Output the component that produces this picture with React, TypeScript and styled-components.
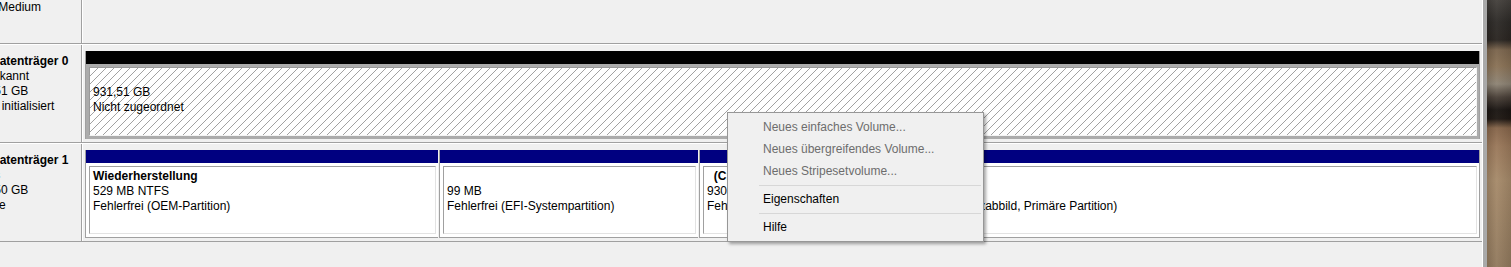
import React from 'react';
import styled, { createGlobalStyle } from 'styled-components';

const GlobalStyle = createGlobalStyle`
  html, body { margin: 0; padding: 0; background: #f0f0f0; }
  body {
    font-family: "Segoe UI", "Liberation Sans", Arial, sans-serif;
    font-size: 12px;
    color: #000;
    overflow: hidden;
  }
  #root { width: 1511px; height: 267px; }
`;

const Desktop = styled.div`
  position: relative;
  display: flex;
  width: 1511px;
  height: 267px;
  overflow: hidden;
`;

const Window = styled.div`
  flex: 0 0 1520px;
  margin-left: -33px;
  display: flex;
  flex-direction: column;
  box-sizing: border-box;
  height: 100%;
  background: #f0f0f0;
  border-right: 4px solid #a9a9a9;
`;

const DiskList = styled.div`
  flex: 1;
  margin-top: -55px;
  border-right: 1px solid #ffffff;
`;

const Row = styled.div`
  display: flex;
  height: 99px;
  box-sizing: border-box;
  border-top: 1px solid #ffffff;
  border-bottom: 1px solid #a0a0a0;
`;

const LabelCell = styled.div`
  flex: 0 0 115px;
  box-sizing: border-box;
  border-right: 1px solid #a0a0a0;
  padding: 9px 0 0 4px;
  line-height: 15px;
  white-space: nowrap;
  overflow: hidden;
`;

const LabelTitle = styled.div`
  display: flex;
  align-items: center;
  height: 15px;
  font-weight: bold;
  svg { flex: 0 0 16px; margin-right: 4px; }
`;

const LabelLine = styled.div`
  height: 15px;
`;

const GraphicCell = styled.div`
  flex: 1;
  display: flex;
  gap: 1px;
  border-left: 1px solid #ffffff;
  padding: 6px 2px 3px 2px;
  min-width: 0;
`;

const Partition = styled.div<{ $width?: number; $last?: boolean }>`
  display: flex;
  flex-direction: column;
  flex: ${(p) => (p.$width ? `0 0 ${p.$width}px` : '1')};
  box-sizing: border-box;
  border-left: 1px solid #a0a0a0;
  border-right: ${(p) => (p.$last ? '1px solid #a0a0a0' : '0')};
  min-width: 0;
`;

const Bar = styled.div<{ $color: string }>`
  height: 13px;
  background: ${(p) => p.$color};
`;

const Body = styled.div`
  height: 75px;
  box-sizing: border-box;
  display: flex;
  background: #ffffff;
  border-bottom: 1px solid #a0a0a0;
  padding: 3px 2px 3px 3px;
`;

const FrameBody = styled.div`
  height: 75px;
  box-sizing: border-box;
  display: flex;
  background: #acacac;
  padding: 3px 2px 3px 3px;
`;

const Inner = styled.div`
  flex: 1;
  box-sizing: border-box;
  border-top: 1px solid #a0a0a0;
  border-left: 1px solid #a0a0a0;
  border-right: 1px solid #e3e3e3;
  border-bottom: 1px solid #e3e3e3;
  padding: 2px 3px;
  line-height: 15px;
  white-space: nowrap;
  overflow: hidden;
  background: #ffffff;
`;

const HatchInner = styled(Inner)`
  border-top-color: #9a9a9a;
  border-left-color: #9a9a9a;
  border-right-color: #f4f4f4;
  border-bottom-color: #f4f4f4;
  background-color: #ffffff;
  background-image: linear-gradient(
    135deg,
    transparent 0 44%,
    #a2a2a2 44% 56%,
    transparent 56% 100%
  );
  background-size: 8px 8px;
`;

const Line = styled.div`
  height: 15px;
`;

const TitleLine = styled.div`
  height: 15px;
  font-weight: bold;
  white-space: pre;
`;

const Wallpaper = styled.div`
  flex: 1;
  background:
    linear-gradient(90deg, rgba(0,0,0,0.12), rgba(255,255,255,0.04) 40%, rgba(0,0,0,0.1)),
    linear-gradient(
      to bottom,
      #45413d 0px,
      #2d2a27 22px,
      #2a2521 40px,
      #7b654d 50px,
      #8a7256 66px,
      #8e8475 84px,
      #4a4038 97px,
      #1a1512 110px,
      #1f1813 119px,
      #86654a 128px,
      #9a785a 146px,
      #a68a6a 180px,
      #9c8264 225px,
      #927a5e 267px
    );
`;

const Menu = styled.div`
  position: absolute;
  left: 727px;
  top: 112px;
  width: 257px;
  box-sizing: border-box;
  background: #f0f0f0;
  border: 1px solid #979797;
  padding: 3px 2px 3px 2px;
  box-shadow: 2px 2px 3px rgba(0, 0, 0, 0.35);
`;

const MenuItem = styled.div<{ $disabled?: boolean }>`
  height: 22px;
  line-height: 22px;
  padding-left: 33px;
  color: ${(p) => (p.$disabled ? '#6d6d6d' : '#000000')};
  white-space: nowrap;
`;

const MenuSeparator = styled.div`
  height: 6px;
  display: flex;
  flex-direction: column;
  padding: 3px 0 0 29px;
  box-sizing: border-box;
  &::after {
    content: '';
    display: block;
    height: 1px;
    background: #d7d7d7;
  }
`;

const DiskIcon = () => (
  <svg width="16" height="16" viewBox="0 0 16 16">
    <rect x="1" y="4" width="14" height="8" rx="1" fill="#9aa3ab" stroke="#5a6168" />
    <rect x="3" y="9" width="3" height="1" fill="#3fbf3f" />
  </svg>
);

const CdIcon = () => (
  <svg width="16" height="16" viewBox="0 0 16 16">
    <circle cx="8" cy="8" r="6.5" fill="#dfe3e8" stroke="#7b8591" />
    <circle cx="8" cy="8" r="1.8" fill="#ffffff" stroke="#7b8591" />
  </svg>
);

type Part = {
  width?: number;
  color: string;
  title?: string;
  lines: string[];
  hatch?: boolean;
  last?: boolean;
};

type Disk = {
  icon: React.ReactNode;
  title: string;
  info: string[];
  parts: Part[];
};

const disks: Disk[] = [
  {
    icon: <CdIcon />,
    title: 'CD-ROM 0',
    info: ['DVD (E:)', '', 'Kein Medium'],
    parts: [],
  },
  {
    icon: <DiskIcon />,
    title: 'Datenträger 0',
    info: ['Unbekannt', '931,51 GB', 'Nicht initialisiert'],
    parts: [
      {
        color: '#000000',
        lines: ['931,51 GB', 'Nicht zugeordnet'],
        hatch: true,
        last: true,
      },
    ],
  },
  {
    icon: <DiskIcon />,
    title: 'Datenträger 1',
    info: ['Basis', '931,50 GB', 'Online'],
    parts: [
      {
        width: 353,
        color: '#000080',
        title: 'Wiederherstellung',
        lines: ['529 MB NTFS', 'Fehlerfrei (OEM-Partition)'],
      },
      {
        width: 259,
        color: '#000080',
        lines: ['99 MB', 'Fehlerfrei (EFI-Systempartition)'],
      },
      {
        color: '#000080',
        title: '  (C:)',
        lines: [
          '930,88 GB NTFS',
          'Fehlerfrei (Startpartition, Auslagerungsdatei, Absturzabbild, Primäre Partition)',
        ],
        last: true,
      },
    ],
  },
];

const PartitionView = ({ part }: { part: Part }) => {
  const content = (
    <>
      <TitleLine>{part.title ?? ''}</TitleLine>
      {part.lines.map((l, i) => (
        <Line key={i}>{l}</Line>
      ))}
    </>
  );
  return (
    <Partition $width={part.width} $last={part.last}>
      <Bar $color={part.color} />
      {part.hatch ? (
        <FrameBody>
          <HatchInner>{content}</HatchInner>
        </FrameBody>
      ) : (
        <Body>
          <Inner>{content}</Inner>
        </Body>
      )}
    </Partition>
  );
};

const menuItems: ({ label: string; disabled?: boolean } | 'sep')[] = [
  { label: 'Neues einfaches Volume...', disabled: true },
  { label: 'Neues übergreifendes Volume...', disabled: true },
  { label: 'Neues Stripesetvolume...', disabled: true },
  'sep',
  { label: 'Eigenschaften' },
  'sep',
  { label: 'Hilfe' },
];

export default function App() {
  return (
    <>
      <GlobalStyle />
      <Desktop>
        <Window>
          <DiskList>
            {disks.map((d) => (
              <Row key={d.title}>
                <LabelCell>
                  <LabelTitle>
                    {d.icon}
                    {d.title}
                  </LabelTitle>
                  {d.info.map((t, i) => (
                    <LabelLine key={i}>{t}</LabelLine>
                  ))}
                </LabelCell>
                <GraphicCell>
                  {d.parts.map((p, i) => (
                    <PartitionView key={i} part={p} />
                  ))}
                </GraphicCell>
              </Row>
            ))}
          </DiskList>
        </Window>
        <Wallpaper />
        <Menu>
          {menuItems.map((m, i) =>
            m === 'sep' ? (
              <MenuSeparator key={i} />
            ) : (
              <MenuItem key={i} $disabled={m.disabled}>
                {m.label}
              </MenuItem>
            )
          )}
        </Menu>
      </Desktop>
    </>
  );
}
